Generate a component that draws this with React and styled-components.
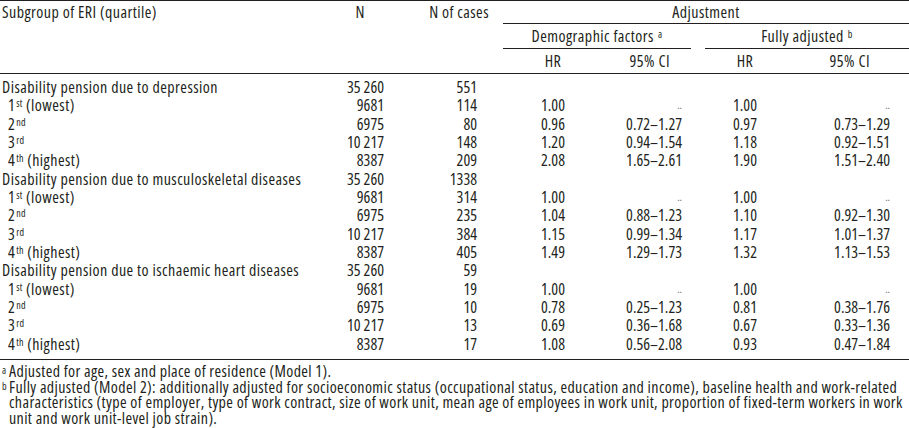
import React from "react";
import styled, { createGlobalStyle } from "styled-components";

const INK = "#231f20";
const COLS = "334px 58px 110px 100px 103px 100px 104px";

const Global = createGlobalStyle`
  html, body { margin: 0; padding: 0; background: #fff; }
  body {
    font-family: "Open Sans", "Liberation Sans", sans-serif;
    font-stretch: 75%;
    font-size: 16px;
    letter-spacing: 0.45px;
    color: ${INK};
  }
`;

const Page = styled.div`
  width: 909px;
  height: 428px;
  overflow: hidden;
`;

const HeadGrid = styled.div`
  display: grid;
  grid-template-columns: ${COLS};
  grid-template-rows: 23px 25px 24px;
  border-top: 1px solid ${INK};
  border-bottom: 1px solid ${INK};
`;

const HeadCell = styled.div`
  grid-column: ${(p) => p.$col};
  grid-row: ${(p) => p.$row};
  align-self: ${(p) => (p.$top ? "start" : "stretch")};
  text-align: ${(p) => p.$align || "center"};
  padding: ${(p) => p.$pad || "0"};
  line-height: ${(p) => p.$lh || 23}px;
  margin-right: ${(p) => p.$gap || 0}px;
  margin-left: ${(p) => p.$lgap || 0}px;
  border-bottom: ${(p) => (p.$rule ? `1px solid ${INK}` : "none")};
  white-space: nowrap;
`;

const Note = styled.sup`
  font-size: 10px;
  line-height: 0;
  vertical-align: 4px;
  margin-left: ${(p) => p.$ml || 0}px;
`;

const BodyGrid = styled.div`
  display: grid;
  grid-template-columns: ${COLS};
  grid-auto-rows: 18.35px;
  padding: 4px 0 6px;
  border-bottom: 1px solid ${INK};
`;

const Label = styled.div`
  grid-column: 1;
  padding-left: ${(p) => (p.$sub ? 8 : 2)}px;
  line-height: 18px;
  white-space: nowrap;
`;

const Num = styled.div`
  text-align: right;
  padding-right: ${(p) => p.$pr}px;
  line-height: 18px;
  letter-spacing: 0;
  white-space: nowrap;
`;

const Ratio = styled.div`
  text-align: center;
  padding-left: ${(p) => p.$pl || 0}px;
  padding-right: ${(p) => p.$pr || 0}px;
  line-height: 18px;
  letter-spacing: 0;
`;

const Dots = styled.span`
  font-size: 11px;
  color: #6a6a6a;
  vertical-align: 2px;
`;

const Ord = styled.sup`
  font-size: 10px;
  line-height: 0;
  vertical-align: 4px;
  letter-spacing: 0.2px;
  margin-left: 1px;
`;

const Blank = styled.div`
  grid-column: span 4;
`;

const Foot = styled.div`
  padding-top: 4px;
  line-height: 15.5px;
`;

const FootItem = styled.div`
  display: flex;
`;

const Marker = styled.span`
  flex: 0 0 7px;
  padding-left: 2px;
  font-size: 10px;
  line-height: 13px;
`;

const FootLine = styled.span`
  display: block;
  white-space: nowrap;
  letter-spacing: 0.38px;
`;

const groups = [
  {
    title: "Disability pension due to depression",
    n: "35 260",
    cases: "551",
    rows: [
      ["1", "st", " (lowest)", "9681", "114", "1.00", "..", "1.00", ".."],
      ["2", "nd", "", "6975", "80", "0.96", "0.72–1.27", "0.97", "0.73–1.29"],
      ["3", "rd", "", "10 217", "148", "1.20", "0.94–1.54", "1.18", "0.92–1.51"],
      ["4", "th", " (highest)", "8387", "209", "2.08", "1.65–2.61", "1.90", "1.51–2.40"],
    ],
  },
  {
    title: "Disability pension due to musculoskeletal diseases",
    n: "35 260",
    cases: "1338",
    rows: [
      ["1", "st", " (lowest)", "9681", "314", "1.00", "..", "1.00", ".."],
      ["2", "nd", "", "6975", "235", "1.04", "0.88–1.23", "1.10", "0.92–1.30"],
      ["3", "rd", "", "10 217", "384", "1.15", "0.99–1.34", "1.17", "1.01–1.37"],
      ["4", "th", " (highest)", "8387", "405", "1.49", "1.29–1.73", "1.32", "1.13–1.53"],
    ],
  },
  {
    title: "Disability pension due to ischaemic heart diseases",
    n: "35 260",
    cases: "59",
    rows: [
      ["1", "st", " (lowest)", "9681", "19", "1.00", "..", "1.00", ".."],
      ["2", "nd", "", "6975", "10", "0.78", "0.25–1.23", "0.81", "0.38–1.76"],
      ["3", "rd", "", "10 217", "13", "0.69", "0.36–1.68", "0.67", "0.33–1.36"],
      ["4", "th", " (highest)", "8387", "17", "1.08", "0.56–2.08", "0.93", "0.47–1.84"],
    ],
  },
];

const ci = (v) => (v === ".." ? <Dots>..</Dots> : v);

export default function App() {
  return (
    <Page>
      <Global />
      <HeadGrid>
        <HeadCell $col="1" $row="1 / 4" $top $align="left" $pad="0 0 0 2px">
          Subgroup of ERI (quartile)
        </HeadCell>
        <HeadCell $col="2" $row="1 / 4" $top $align="right" $pad="0 27px 0 0">
          N
        </HeadCell>
        <HeadCell $col="3" $row="1 / 4" $top $align="right" $pad="0 13px 0 0">
          N of cases
        </HeadCell>
        <HeadCell $col="4 / 8" $row="1" $rule $lgap={1}>
          Adjustment
        </HeadCell>
        <HeadCell $col="4 / 6" $row="2" $rule $lgap={1} $gap={14} $lh={24}>
          Demographic factors<Note $ml={4}>a</Note>
        </HeadCell>
        <HeadCell $col="6 / 8" $row="2" $rule $lh={24}>
          Fully adjusted<Note $ml={4}>b</Note>
        </HeadCell>
        <HeadCell $col="4" $row="3" $lh={24} $pad="0 0 0 2px">HR</HeadCell>
        <HeadCell $col="5" $row="3" $lh={24} $align="right" $pad="0 35px 0 0">
          95% CI
        </HeadCell>
        <HeadCell $col="6" $row="3" $lh={24} $pad="0 20px 0 0">HR</HeadCell>
        <HeadCell $col="7" $row="3" $lh={24} $align="right" $pad="0 39px 0 0">
          95% CI
        </HeadCell>
      </HeadGrid>
      <BodyGrid>
        {groups.map((g) => (
          <React.Fragment key={g.title}>
            <Label>{g.title}</Label>
            <Num $pr={8}>{g.n}</Num>
            <Num $pr={25}>{g.cases}</Num>
            <Blank />
            {g.rows.map((r) => (
              <React.Fragment key={g.title + r[0]}>
                <Label $sub>
                  {r[0]}
                  <Ord>{r[1]}</Ord>
                  {r[2]}
                </Label>
                <Num $pr={8}>{r[3]}</Num>
                <Num $pr={25}>{r[4]}</Num>
                <Ratio $pl={2}>{r[5]}</Ratio>
                <Num $pr={23}>{ci(r[6])}</Num>
                <Ratio $pr={20}>{r[7]}</Ratio>
                <Num $pr={19}>{ci(r[8])}</Num>
              </React.Fragment>
            ))}
          </React.Fragment>
        ))}
      </BodyGrid>
      <Foot>
        <FootItem>
          <Marker>a</Marker>
          <FootLine>Adjusted for age, sex and place of residence (Model 1).</FootLine>
        </FootItem>
        <FootItem>
          <Marker>b</Marker>
          <div>
            <FootLine>
              Fully adjusted (Model 2): additionally adjusted for socioeconomic status (occupational status, education and income), baseline health and work-related
            </FootLine>
            <FootLine>
              characteristics (type of employer, type of work contract, size of work unit, mean age of employees in work unit, proportion of fixed-term workers in work
            </FootLine>
            <FootLine>unit and work unit-level job strain).</FootLine>
          </div>
        </FootItem>
      </Foot>
    </Page>
  );
}
